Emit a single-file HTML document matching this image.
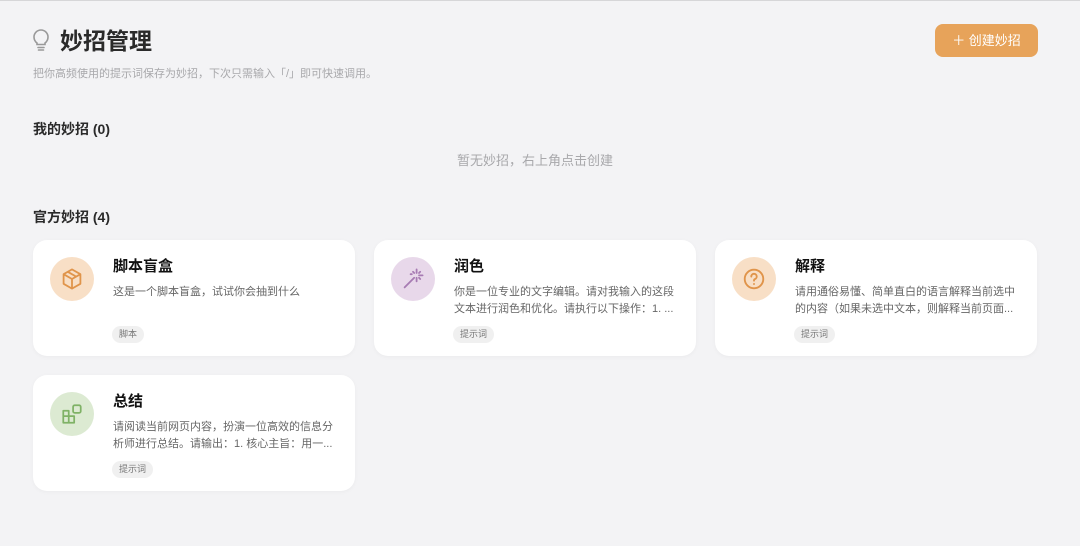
<!DOCTYPE html>
<html><head><meta charset="utf-8"><style>
*{margin:0;padding:0;box-sizing:border-box}
body{width:1080px;height:546px;background:#f3f3f5;font-family:"Liberation Sans","Noto Sans CJK SC",sans-serif;position:relative;overflow:hidden;border-top:1px solid #d6d6d8}
.abs{position:absolute}
h1{position:absolute;left:60px;top:21px;font-size:23px;font-weight:700;color:#2a2a2a}
.sub{left:33px;top:64px;font-size:11px;color:#a8a8ab}
.btn{left:935px;top:23px;width:103px;height:33px;background:#e7a35a;border-radius:8px;color:#fff;font-size:13px;text-align:center;line-height:33px}
.sec{left:33px;font-size:14px;font-weight:700;color:#2a2a2a}
.empty{left:0;width:1070px;top:149px;text-align:center;font-size:13px;color:#a8a8ab}
.card{position:absolute;width:322px;height:116px;background:#fff;border-radius:14px;box-shadow:0 1px 4px rgba(0,0,0,0.04)}
.ic{position:absolute;left:17px;top:17px;width:44px;height:44px;border-radius:50%;display:flex;align-items:center;justify-content:center}
.t{position:absolute;left:80px;top:15px;font-size:15px;font-weight:700;color:#111}
.d{position:absolute;left:80px;top:44px;width:222px;font-size:11px;line-height:17px;color:#666}
.tag{position:absolute;left:79px;top:86px;height:17px;padding:0 7px;border-radius:9px;background:#f0f0f0;font-size:9px;line-height:17px;color:#777}
</style></head><body>
<svg class="abs" style="left:32px;top:27px" width="18" height="24" viewBox="0 0 18 24" fill="none" stroke="#999" stroke-width="1.6" stroke-linecap="round"><path d="M5 15c-2-1.5-3-3.5-3-6a7 7 0 0 1 14 0c0 2.5-1 4.5-3 6v1.5H5z"/><path d="M6 19.5h6M6.5 22h5"/></svg>
<h1>妙招管理</h1>
<div class="abs sub">把你高频使用的提示词保存为妙招，下次只需输入「/」即可快速调用。</div>
<div class="abs btn">＋ 创建妙招</div>
<div class="abs sec" style="top:118px">我的妙招 (0)</div>
<div class="abs empty">暂无妙招，右上角点击创建</div>
<div class="abs sec" style="top:206px">官方妙招 (4)</div>

<div class="card" style="left:33px;top:239px">
<div class="ic" style="background:#f8dfc6"><svg width="24" height="24" viewBox="0 0 20 20" fill="none" stroke="#e0944a" stroke-width="1.5" stroke-linejoin="round"><path d="M10 2l7 4v8l-7 4-7-4V6z"/><path d="M3 6l7 4 7-4M10 10v8M6.5 4l7 4"/></svg></div>
<div class="t">脚本盲盒</div><div class="d">这是一个脚本盲盒，试试你会抽到什么</div><div class="tag">脚本</div></div>

<div class="card" style="left:374px;top:239px">
<div class="ic" style="background:#e8d8ea"><svg width="24" height="24" viewBox="0 0 20 20" fill="none" stroke="#a77bb3" stroke-width="1.5" stroke-linecap="round"><path d="M3 17l8-8M13 2v3M13 9v3M9 6h-1M18 7h-3M16 4l-1 1M16 10l-1-1M10 4l1 1"/></svg></div>
<div class="t">润色</div><div class="d">你是一位专业的文字编辑。请对我输入的这段文本进行润色和优化。请执行以下操作：1. ...</div><div class="tag">提示词</div></div>

<div class="card" style="left:715px;top:239px">
<div class="ic" style="background:#f8dfc6"><svg width="24" height="24" viewBox="0 0 22 22" fill="none" stroke="#e0944a" stroke-width="1.7" stroke-linecap="round"><circle cx="11" cy="11" r="8.5"/><path d="M8.5 8.8a2.5 2.5 0 1 1 3.3 2.3c-.6.3-.8.7-.8 1.4"/><path d="M11 15.5v.1"/></svg></div>
<div class="t">解释</div><div class="d">请用通俗易懂、简单直白的语言解释当前选中的内容（如果未选中文本，则解释当前页面...</div><div class="tag">提示词</div></div>

<div class="card" style="left:33px;top:374px">
<div class="ic" style="background:#dcead2"><svg width="24" height="24" viewBox="0 0 22 22" fill="none" stroke="#7fb266" stroke-width="1.6" stroke-linejoin="round"><path d="M3 8h5v5h5v6H3z"/><path d="M3 13h5v6M8 13v0"/><rect x="12" y="3" width="7" height="7" rx="1.5"/></svg></div>
<div class="t">总结</div><div class="d">请阅读当前网页内容，扮演一位高效的信息分析师进行总结。请输出：1. 核心主旨：用一...</div><div class="tag">提示词</div></div>
</body></html>
